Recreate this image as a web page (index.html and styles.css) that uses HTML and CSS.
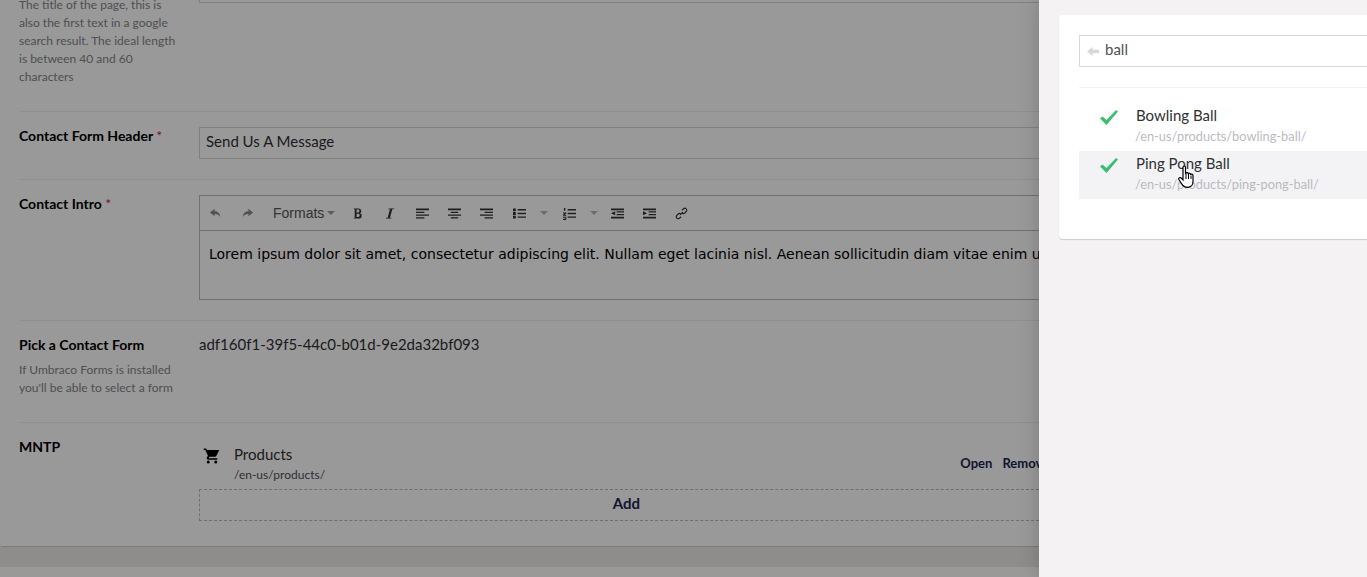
FILE: index.html
```html
<!DOCTYPE html>
<html lang="en">
<head>
<meta charset="utf-8">
<title>Contact</title>
<link rel="stylesheet" href="styles.css">
</head>
<body>
<main class="page">
  <section class="card">
    <div class="row row-title">
      <div class="label">
        <p class="hint">The title of the page, this is also the first text in a google search result. The ideal length is between 40 and 60 characters</p>
      </div>
      <div class="field"><div class="input input-clipped"></div></div>
    </div>
    <div class="row row-header">
      <div class="label"><h3>Contact Form Header <span class="req">*</span></h3></div>
      <div class="field"><div class="input">Send Us A Message</div></div>
    </div>
    <div class="row row-intro">
      <div class="label"><h3>Contact Intro <span class="req">*</span></h3></div>
      <div class="field">
        <div class="editor">
          <div class="toolbar">
            <svg class="ti muted" viewBox="0 0 14 14"><path d="M6 2 1 6l5 4V7.500c3 0 5 .8 6 3.500 0-4-2-6.500-6-6.500z"/></svg>
            <svg class="ti muted t-redo" viewBox="0 0 14 14"><path d="M8 2l5 4-5 4V7.500c-3 0-5 .8-6 3.500 0-4 2-6.500 6-6.500z"/></svg>
            <span class="formats">Formats</span><i class="caret c-formats"></i>
            <svg class="ti t-b" viewBox="0 0 14 14"><path d="M3 1.500h5c2 0 3 1 3 2.700 0 1.200-.6 2-1.600 2.400 1.300.3 2.100 1.300 2.100 2.700 0 2-1.300 3.200-3.500 3.200H3v-1h1V2.500H3zm3 1.200v3.300h1.500c1 0 1.500-.6 1.500-1.700s-.5-1.600-1.500-1.600zm0 4.500v3.600h1.700c1.100 0 1.700-.7 1.700-1.800S8.800 7.200 7.700 7.200z"/></svg>
            <svg class="ti t-i" viewBox="0 0 14 14"><path d="M6 1.500h6l-.3 1h-1.700L7.500 11.500h1.700l-.3 1H3l.3-1H5L7.500 2.500H5.700z"/></svg>
            <svg class="ti t-l" viewBox="0 0 14 14"><path d="M0 1.500h14v2H0zM0 5h9v1.500H0zM0 8h14v1.500H0zM0 11h9v1.500H0z"/></svg>
            <svg class="ti t-c" viewBox="0 0 14 14"><path d="M0 1.500h14v2H0zM3 5h8v1.500H3zM0 8h14v1.500H0zM3 11h8v1.500H3z"/></svg>
            <svg class="ti t-r" viewBox="0 0 14 14"><path d="M0 1.500h14v2H0zM5 5h9v1.500H5zM0 8h14v1.500H0zM5 11h9v1.500H5z"/></svg>
            <svg class="ti t-ul" viewBox="0 0 14 14"><path d="M0 1.500h3v3H0zM0 5.500h3v3H0zM0 9.500h3v3H0zM5 2.200h9v1.500H5zM5 6.200h9v1.500H5zM5 10.200h9v1.500H5z"/></svg><i class="caret muted-caret c-ul"></i>
            <svg class="ti t-ol" viewBox="0 0 14 14"><path d="M1 1h1.500v3H1zM0 6h3.500v1L2 8.500h1.500V9.500H0v-1l1.500-1.500H0zM0 10.500h3.500v3.500H0V13h2.500v-.5H1V12h1.500v-.5H0zM5 2.200h9v1.500H5zM5 6.200h9v1.500H5zM5 10.200h9v1.500H5z"/></svg><i class="caret muted-caret c-ol"></i>
            <svg class="ti t-out" viewBox="0 0 14 14"><path d="M0 1.500h14v2H0zM6 4.500h8V6H6zM6 7.500h8V9H6zM0 10.500h14v2H0zM4.500 4.500v4.500L0 6.800z"/></svg>
            <svg class="ti t-in" viewBox="0 0 14 14"><path d="M0 1.500h14v2H0zM6 4.500h8V6H6zM6 7.500h8V9H6zM0 10.500h14v2H0zM0 4.500v4.500l4.500-2.200z"/></svg>
            <svg class="ti t-link" viewBox="0 0 14 14"><path class="link" d="M5.500 8.500 8.500 5.500M7.500 3.500l1.500-1.500a2 2 0 0 1 3 3l-1.500 1.500a2 2 0 0 1-2.500.2M6.500 10.500 5 12a2 2 0 0 1-3-3l1.500-1.500a2 2 0 0 1 2.500-.2"/></svg>
          </div>
          <div class="editor-body">Lorem ipsum dolor sit amet, consectetur adipiscing elit. Nullam eget lacinia nisl. Aenean sollicitudin diam vitae enim ultrices, a bibendum</div>
        </div>
      </div>
    </div>
    <div class="row row-form">
      <div class="label">
        <h3>Pick a Contact Form</h3>
        <p class="hint">If Umbraco Forms is installed you'll be able to select a form</p>
      </div>
      <div class="field guid">adf160f1-39f5-44c0-b01d-9e2da32bf093</div>
    </div>
    <div class="row row-mntp">
      <div class="label"><h3>MNTP</h3></div>
      <div class="field">
        <div class="node">
          <svg class="cart" viewBox="0 0 24 24"><path d="M7 18a2 2 0 1 0 0 4 2 2 0 0 0 0-4zm10 0a2 2 0 1 0 0 4 2 2 0 0 0 0-4zM1 2v2h2l3.600 7.600-1.400 2.400c-.7 1.300.2 3 1.800 3h12v-2H7.400l1.100-2h7.500c.7 0 1.400-.4 1.700-1L21.700 4H5.200l-.9-2z"/></svg>
          <div class="node-text"><div class="node-name">Products</div><div class="node-path">/en-us/products/</div></div>
          <div class="node-actions"><a>Open</a><a>Remove</a></div>
        </div>
        <div class="add">Add</div>
      </div>
    </div>
  </section>
  <div class="strip"></div>
</main>
<div class="overlay"></div>
<aside class="panel">
  <div class="panel-card">
    <div class="search">
      <svg class="back" viewBox="0 0 14 12"><path d="M0 6 6 1v3h7v4H6v3z"/></svg>
      <span>ball</span>
    </div>
    <div class="results">
      <div class="result">
        <svg class="check" viewBox="0 0 18 15"><path d="M0 8.500 2.500 6.500 6.500 10 16 0l2 1.500L6.500 15z"/></svg>
        <div><div class="r-name">Bowling Ball</div><div class="r-path">/en-us/products/bowling-ball/</div></div>
      </div>
      <div class="result hover">
        <svg class="check" viewBox="0 0 18 15"><path d="M0 8.500 2.500 6.500 6.500 10 16 0l2 1.500L6.500 15z"/></svg>
        <div><div class="r-name">Ping Pong Ball</div><div class="r-path">/en-us/products/ping-pong-ball/</div></div>
      </div>
    </div>
  </div>
</aside>
<svg class="hand" viewBox="0 0 17 24"><path d="M5 2.500c0-2 2.500-2 2.500 0V9l.5-1c.7-.8 2.200-.5 2.300.6.800-.7 2.200-.3 2.300.8.900-.5 2.400 0 2.400 1.300v5.800c0 3-2 5.800-5.500 5.800-3 0-4.700-1.500-6-3.700L1 14.800c-1-1.700 1.200-3 2.400-1.600L5 15z" fill="#fff" stroke="#000" stroke-width="1.200"/><path d="M8 9v5M10.500 9v5M13 10.500V14" stroke="#000" fill="none"/></svg>
</body>
</html>
```

FILE: styles.css
```css
* { box-sizing: border-box; }
html, body { margin: 0; height: 100%; overflow: hidden; }
body { font-family: Lato, "Liberation Sans", sans-serif; background: #fff; color: #1b264f; }
h3, p { margin: 0; }

.page { height: 577px; overflow: hidden; background: #fff; }
.card { height: 547px; padding: 0 0 0 19px; background: #fff; border-bottom: 1px solid #d0cfd1; border-radius: 0 0 3px 3px; overflow: hidden; }
.strip { height: 20px; background: #eeeaea; }

.row { display: flex; border-bottom: 1px solid #f0eeee; }
.row-title { height: 121px; margin-top: -9px; padding-top: 5px; }
.row-header { height: 68px; padding-top: 15px; }
.row-intro { height: 141px; padding-top: 15px; }
.row-form { height: 102px; padding-top: 15px; }
.row-mntp { border-bottom: 0; padding-top: 15px; }

.label { width: 180px; flex: none; padding-right: 20px; }
h3 { font-size: 14px; line-height: 20px; font-weight: 700; color: #000; margin-top: -1px; }
.req { color: #d42054; font-weight: 400; }
.hint { font-size: 12px; line-height: 18px; color: #858488; }
.row-form .hint { margin-top: 6px; }
.field { flex: 1; min-width: 0; }

.input { height: 32px; border: 1px solid #d8d7d9; padding: 0 6px; font-size: 15px; line-height: 27px; color: #303033; }
.input-clipped { margin-top: -25px; }

.editor { border: 1px solid #bbbabf; height: 105px; }
.toolbar { height: 35px; border-bottom: 1px solid #bbbabf; display: flex; align-items: center; padding-left: 9px; }
.ti { width: 13px; height: 13px; fill: #333; flex: none; }
.ti.muted { fill: #8b8b8b; }
.t-redo { margin-left: 19px; }
.formats { margin-left: 19px; font: 14px "Liberation Sans", sans-serif; color: #555; }
.caret { width: 0; height: 0; flex: none; border: 4px solid transparent; border-top-color: #999; border-bottom: 0; }
.c-formats { margin-left: 3px; }
.muted-caret { border-top-color: #b5b5b5; }
.t-b { margin-left: 16px; }
.t-i { margin-left: 19px; }
.t-l { margin-left: 20px; }
.t-c { margin-left: 19px; }
.t-r { margin-left: 19px; }
.t-ul { margin-left: 20px; }
.c-ul { margin-left: 14px; }
.t-ol { margin-left: 15px; }
.c-ol { margin-left: 14px; }
.t-out { margin-left: 13px; }
.t-in { margin-left: 19px; }
.t-link { margin-left: 19px; }
.link { fill: none; stroke: #333; stroke-width: 1.300; }
.editor-body { padding: 14px 9px 0; font: 14px/18px "DejaVu Sans", Verdana, sans-serif; color: #000; white-space: nowrap; overflow: hidden; }

.guid { font-size: 15px; line-height: 20px; color: #303033; margin-top: -2px; }

.node { display: flex; align-items: flex-start; height: 51px; padding-top: 6px; }
.cart { width: 18px; height: 18px; margin: 3px 0 0 4px; fill: #000; flex: none; }
.node-text { margin-left: 13px; }
.node-name { font-size: 15px; line-height: 20px; color: #303033; }
.node-path { font-size: 12px; line-height: 18px; margin-top: 2px; color: #515054; }
.node-actions { margin-left: auto; display: flex; gap: 10px; font-size: 13px; font-weight: 700; line-height: 20px; padding-top: 9px; margin-right: 318px; color: #1b264f; }
.add { width: 855px; height: 32px; border: 1px dashed #bbbabf; font-size: 15px; font-weight: 700; line-height: 27px; text-align: center; color: #1b264f; }

.overlay { position: absolute; inset: 0 328px 0 0; background: rgba(0,0,0,.4); }
.panel { position: absolute; top: 0; right: 0; bottom: 0; width: 328px; padding: 15px 0 0 20px; background: #f4f2f3; box-shadow: 0 0 20px rgba(0,0,0,.19); overflow: hidden; }
.panel-card { width: 340px; height: 224px; padding: 20px 20px 0; background: #fff; border-radius: 3px; box-shadow: 0 1px 1px rgba(0,0,0,.16); }
.search { height: 32px; display: flex; align-items: center; border: 1px solid #d8d7d9; padding: 0 0 5px 7px; font-size: 15px; color: #515054; }
.back { width: 13px; height: 11px; fill: #d8d7d9; margin: 5px 5px 0 0; }
.results { margin-top: 20px; padding-top: 15px; border-top: 1px solid #f3f3f5; }
.result { height: 48px; display: flex; padding-left: 21px; }
.result.hover { background: #f3f3f5; }
.check { width: 18px; height: 15px; margin: 7px 18px 0 0; fill: #3dbd70; flex: none; }
.r-name { font-size: 15px; line-height: 20px; color: #303033; margin-top: 2px; }
.r-path { font-size: 12.800px; line-height: 18px; color: #bbbabf; margin-top: 2px; margin-left: -1px; }
.hand { position: absolute; left: 1178px; top: 165px; width: 17px; height: 24px; }
```
